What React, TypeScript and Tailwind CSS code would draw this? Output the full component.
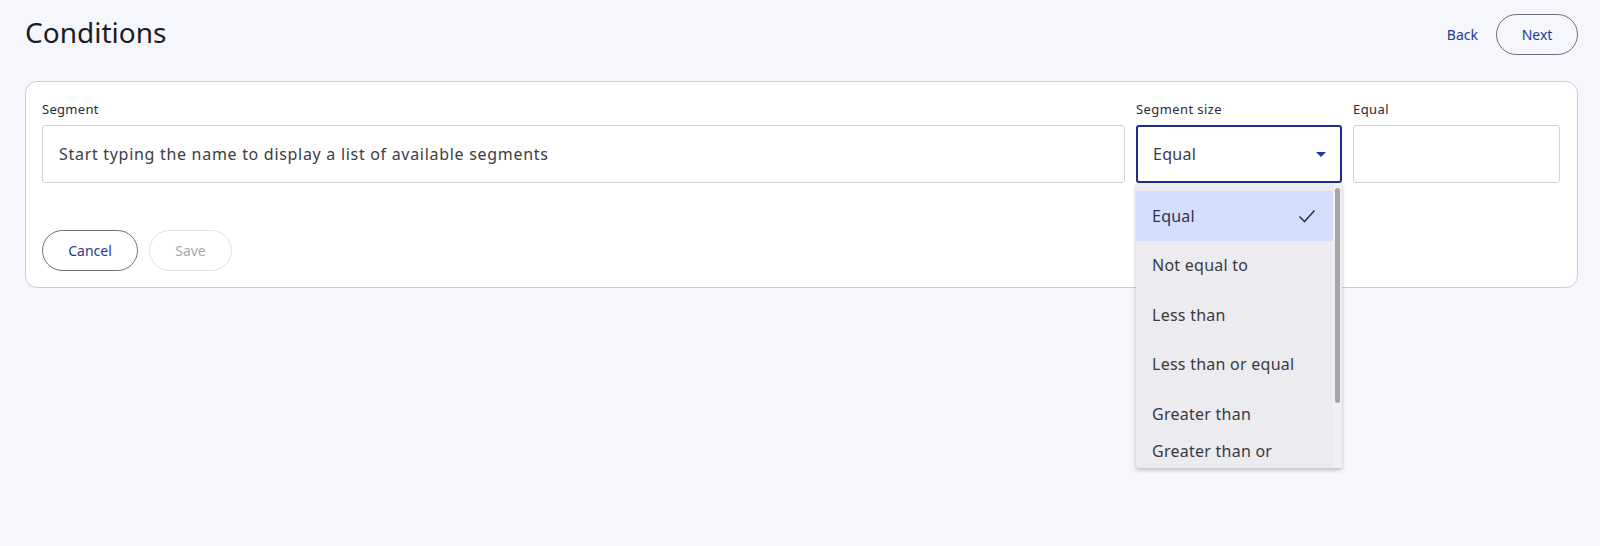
import React from "react";

const options = ["Equal", "Not equal to", "Less than", "Less than or equal", "Greater than", "Greater than or equal"];

export default function App() {
  return (
    <div
      className="w-[1600px] h-[546px] bg-[#f6f7fd] text-[#2b2b33] overflow-hidden"
      style={{ fontFamily: '"Noto Sans", "Open Sans", sans-serif' }}
    >
      <div className="flex items-center justify-between pl-[25px] pr-[22px] pt-[14px] h-[55px]">
        <h1 className="text-[28px] leading-none font-normal text-[#1c1c22] -mt-[5px]">Conditions</h1>
        <div className="flex items-center gap-[18px]">
          <button className="text-[14px] text-[#1d3a94]">Back</button>
          <button className="w-[82px] h-[41px] rounded-full border border-[#6e6e78] text-[14px] text-[#1d3a94]">Next</button>
        </div>
      </div>
      <div className="ml-[25px] mr-[22px] mt-[26px] h-[207px] rounded-[12px] border border-[#cbcdd9] bg-white pl-[16px] pr-[17px] pt-[17px] relative">
        <div className="flex gap-[11px]">
          <div className="flex-1 flex flex-col">
            <label className="text-[13px] leading-[20px] text-[#2b2b33] mb-[6px] tracking-[0.3px]">Segment</label>
            <div className="h-[58px] rounded-[3px] border border-[#cfd1dc] flex items-center px-[16px] text-[16px] text-[#3c3c44] tracking-[0.7px]">
              Start typing the name to display a list of available segments
            </div>
          </div>
          <div className="w-[206px] flex flex-col relative">
            <label className="text-[13px] leading-[20px] text-[#2b2b33] mb-[6px] tracking-[0.4px]">Segment size</label>
            <div className="h-[58px] rounded-[3px] border-2 border-[#1d2f8c] flex items-center justify-between pl-[15px] pr-[14px] text-[16px] text-[#3c3c44] tracking-[0.3px]">
              <span>Equal</span>
              <svg width="10" height="5" viewBox="0 0 10 5"><path d="M0 0h10L5 5z" fill="#1d3a94" /></svg>
            </div>
            <div className="absolute left-0 top-[84px] w-[206px] h-[285px] bg-[#ebebf0] rounded-b-[3px] shadow-[0_2px_4px_rgba(0,0,0,0.25)] overflow-hidden flex z-10">
              <div className="flex-1 pt-[8px]">
                {options.map((o, i) => (
                  <div
                    key={o}
                    className={`min-h-[49.5px] flex items-center justify-between pl-[16px] pr-[17px] text-[16px] leading-[24px] tracking-[0.25px] ${
                      i === 0 ? "bg-[#d3defc] text-[#2e3552]" : "text-[#3a3a42]"
                    }`}
                  >
                    <span className="max-w-[150px]">{o}</span>
                    {i === 0 && (
                      <svg width="18" height="14" viewBox="0 0 18 14">
                        <path d="M1.5 7.5l5 5L16.5 1.5" fill="none" stroke="#2e3552" strokeWidth="1.6" />
                      </svg>
                    )}
                  </div>
                ))}
              </div>
              <div className="w-[9px] bg-[#f0f0f3] pt-[5px] flex justify-center">
                <div className="w-[5px] h-[215px] rounded-full bg-[#a5a5a8]" />
              </div>
            </div>
          </div>
          <div className="w-[207px] flex flex-col">
            <label className="text-[13px] leading-[20px] text-[#2b2b33] mb-[6px] tracking-[0.4px]">Equal</label>
            <div className="h-[58px] rounded-[3px] border border-[#cfd1dc]" />
          </div>
        </div>
        <div className="flex gap-[11px] mt-[47px]">
          <button className="w-[96px] h-[41px] rounded-full border border-[#6e6e78] text-[14px] text-[#1d3a94]">Cancel</button>
          <button className="w-[83px] h-[41px] rounded-full border border-[#e2e2e6] text-[14px] text-[#a8a8ae]">Save</button>
        </div>
      </div>
    </div>
  );
}
